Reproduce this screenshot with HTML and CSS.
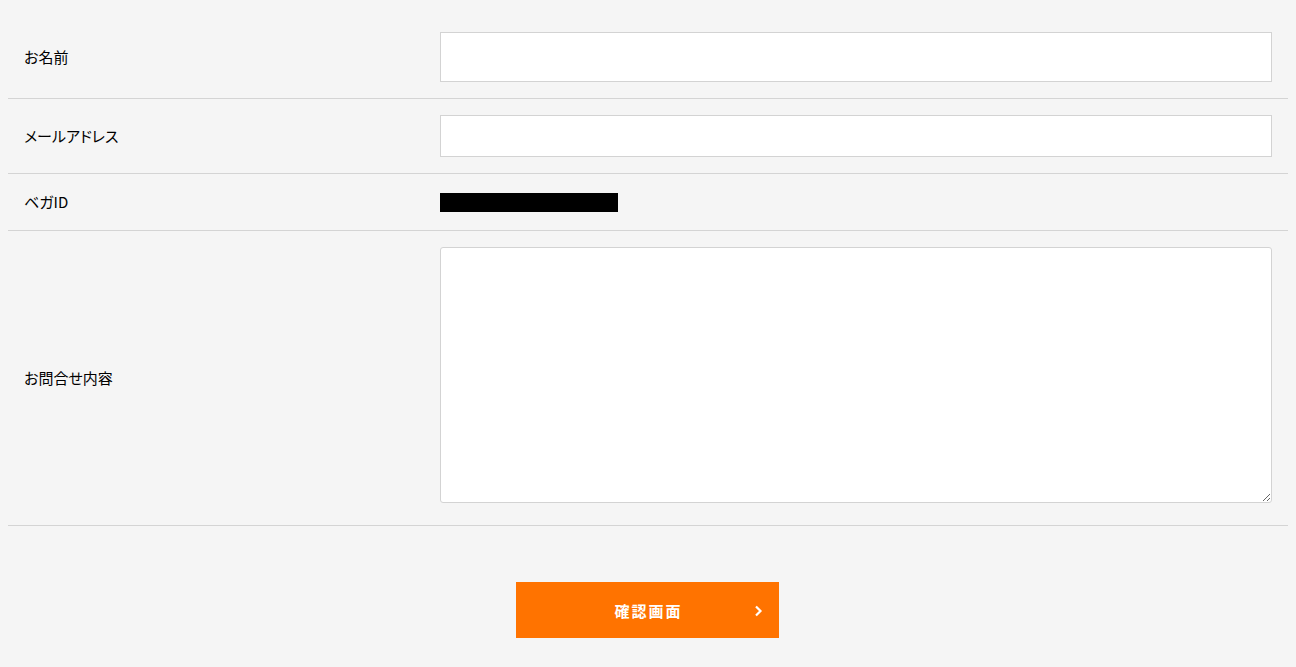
FILE: index.html
```html
<!DOCTYPE html>
<html lang="ja">
<head>
<meta charset="utf-8">
<link rel="stylesheet" href="styles.css">
</head>
<body>
<form class="form">
  <div class="row">
    <div class="label">お名前</div>
    <div class="field"><input class="text" type="text"></div>
  </div>
  <div class="row">
    <div class="label">メールアドレス</div>
    <div class="field"><input class="text text-mail" type="text"></div>
  </div>
  <div class="row row-id">
    <div class="label">ベガID</div>
    <div class="field"><span class="masked"></span></div>
  </div>
  <div class="row row-msg">
    <div class="label">お問合せ内容</div>
    <div class="field"><textarea class="area"></textarea></div>
  </div>
  <div class="actions">
    <button class="submit" type="button">
      <span class="submit-text">確認画面</span>
      <svg class="chev" width="9" height="12" viewBox="0 0 9 12"><path d="M2 1.5 L6.5 6 L2 10.5" fill="none" stroke="#fff" stroke-width="2.2"/></svg>
    </button>
  </div>
</form>
</body>
</html>
```
FILE: styles.css
```css
html, body {
  margin: 0;
  padding: 0;
  background: #f5f5f5;
}
body {
  padding: 16px 8px 0 8px;
  font-family: "Noto Sans CJK JP", "Noto Sans", sans-serif;
  font-size: 15px;
  color: #000;
}
.form {
  margin: 0;
}
.row {
  display: grid;
  grid-template-columns: 432px 1fr;
  border-bottom: 1px solid #d4d4d4;
}
.label {
  display: flex;
  align-items: center;
  padding-left: 16px;
  font-size: 15px;
  line-height: 20px;
  font-feature-settings: "palt";
}
.field {
  padding: 16px 16px 16px 0;
  display: flex;
  align-items: center;
}
.text {
  display: block;
  box-sizing: border-box;
  width: 100%;
  height: 50px;
  margin: 0;
  border: 1px solid #d3d3d3;
  background: #fff;
  border-radius: 0;
  outline: none;
}
.text-mail {
  height: 42px;
}
.row-id .field {
  padding: 19px 16px 18px 0;
}
.masked {
  display: block;
  width: 178px;
  height: 19px;
  background: #000;
}
.row-msg .field {
  padding: 16px 16px 22px 0;
}
.area {
  display: block;
  box-sizing: border-box;
  width: 100%;
  height: 256px;
  margin: 0;
  border: 1px solid #d3d3d3;
  border-radius: 3px;
  background: #fff;
  resize: both;
  outline: none;
}
.actions {
  display: flex;
  justify-content: center;
  padding-top: 56px;
  padding-bottom: 29px;
  padding-right: 1px;
}
.submit {
  position: relative;
  width: 263px;
  height: 56px;
  margin: 0;
  border: none;
  border-radius: 0;
  background: #ff7300;
  color: #fff;
  font-family: "Noto Sans CJK JP", "Noto Sans", sans-serif;
  font-size: 15px;
  font-weight: 700;
  letter-spacing: 2px;
  display: flex;
  align-items: center;
  justify-content: center;
  cursor: pointer;
}
.submit-text {
  margin-left: 2px;
}
.chev {
  position: absolute;
  right: 16px;
  top: 23px;
}
```
